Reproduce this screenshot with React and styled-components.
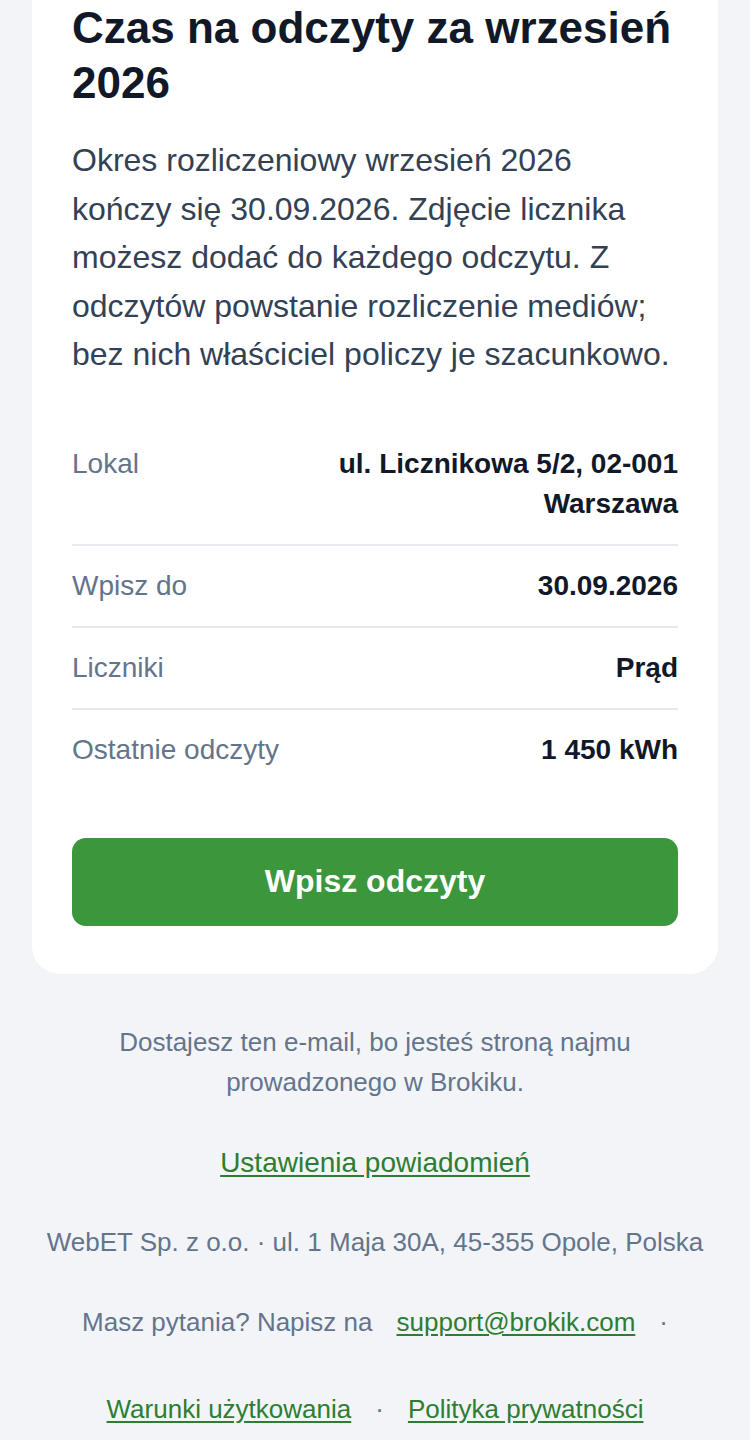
import React from 'react';
import styled, { createGlobalStyle } from 'styled-components';

const GlobalStyle = createGlobalStyle`
	body {
		margin: 0;
		background: #f2f4f8;
		font-family: "Liberation Sans", Arial, Helvetica, sans-serif;
	}
`;

const Page = styled.div`
	padding: 0 32px;
`;

const Card = styled.section`
	background: #ffffff;
	border-radius: 0 0 28px 28px;
	padding: 0 40px 48px;
`;

const Title = styled.h1`
	margin: 0;
	font-size: 44px;
	line-height: 55px;
	font-weight: 700;
	color: #111827;
`;

const Intro = styled.p`
	margin: 26px 0 0;
	font-size: 32px;
	line-height: 48.5px;
	color: #334155;
`;

const Details = styled.div`
	margin-top: 45px;
`;

const Row = styled.div`
	display: flex;
	justify-content: space-between;
	align-items: flex-start;
	gap: 24px;
	padding: 20px 0;
	border-bottom: 2px solid #e8eaef;

	&:last-child {
		border-bottom: 0;
	}
`;

const Label = styled.span`
	font-size: 28px;
	line-height: 40px;
	color: #64748b;
`;

const Value = styled.span`
	max-width: 58%;
	font-size: 28px;
	line-height: 40px;
	font-weight: 700;
	color: #111827;
	text-align: right;
`;

const Button = styled.a`
	display: flex;
	align-items: center;
	justify-content: center;
	margin-top: 48px;
	height: 88px;
	border-radius: 14px;
	background: #3c963c;
	color: #ffffff;
	font-size: 32px;
	font-weight: 700;
	text-decoration: none;
`;

const Footer = styled.footer`
	display: flex;
	flex-direction: column;
	align-items: center;
	padding-top: 48px;
	text-align: center;
	color: #64748b;
	font-size: 26px;
	line-height: 40px;
`;

const Note = styled.p`
	margin: 0;
	max-width: 600px;
`;

const FooterLine = styled.div`
	display: flex;
	justify-content: center;
	gap: 24px;
	margin-top: ${(p) => p.$top || 40}px;
	font-size: ${(p) => p.$size || 26}px;
`;

const Link = styled.a`
	color: #2e7d32;
	text-decoration: underline;
	text-underline-offset: 3px;
`;

const details = [
	{ label: 'Lokal', value: 'ul. Licznikowa 5/2, 02-001 Warszawa' },
	{ label: 'Wpisz do', value: '30.09.2026' },
	{ label: 'Liczniki', value: 'Prąd' },
	{ label: 'Ostatnie odczyty', value: '1 450 kWh' },
];

export default function App() {
	return (
		<Page>
			<GlobalStyle />
			<Card>
				<Title>Czas na odczyty za wrzesień 2026</Title>
				<Intro>
					Okres rozliczeniowy wrzesień 2026 kończy się 30.09.2026. Zdjęcie licznika
					możesz dodać do każdego odczytu. Z odczytów powstanie rozliczenie mediów;
					bez nich właściciel policzy je szacunkowo.
				</Intro>

				<Details>
					{details.map((d) => (
						<Row key={d.label}>
							<Label>{d.label}</Label>
							<Value>{d.value}</Value>
						</Row>
					))}
				</Details>

				<Button href="#">Wpisz odczyty</Button>
			</Card>

			<Footer>
				<Note>Dostajesz ten e-mail, bo jesteś stroną najmu prowadzonego w Brokiku.</Note>
				<FooterLine $top={41} $size={28}>
					<Link href="#">Ustawienia powiadomień</Link>
				</FooterLine>
				<FooterLine $top={39}>
					<span>WebET Sp. z o.o. · ul. 1 Maja 30A, 45-355 Opole, Polska</span>
				</FooterLine>
				<FooterLine>
					<span>Masz pytania? Napisz na</span>
					<Link href="#">support@brokik.com</Link>
					<span>·</span>
				</FooterLine>
				<FooterLine $top={47}>
					<Link href="#">Warunki użytkowania</Link>
					<span>·</span>
					<Link href="#">Polityka prywatności</Link>
				</FooterLine>
			</Footer>
		</Page>
	);
}
